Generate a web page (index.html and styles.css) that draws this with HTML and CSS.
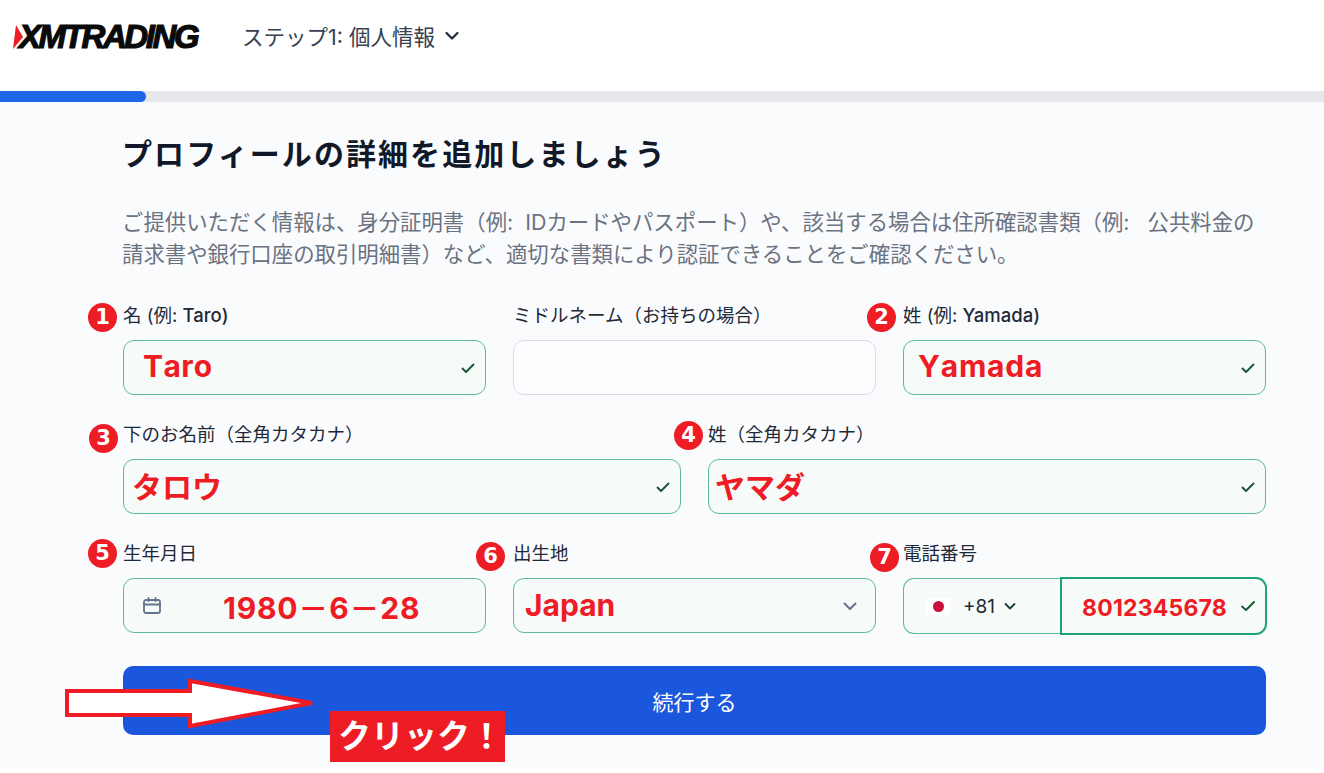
FILE: index.html
```html
<!DOCTYPE html>
<html lang="ja">
<head>
<meta charset="utf-8">
<title>XMTrading</title>
<link rel="stylesheet" href="styles.css">
</head>
<body>
<div class="page">
  <header class="header">
    <div class="logo">
      <svg class="logo-mark" width="10" height="24" viewBox="0 0 10 24"><path d="M3 0 L10 12 L0 24 Z" fill="#ee1c25"/></svg>
      <span class="logo-text">XMTRADING</span>
    </div>
    <div class="step">
      <span>ステップ1: 個人情報</span>
      <svg width="16" height="16" viewBox="0 0 16 16" fill="none" stroke="#1f2937" stroke-width="2.2" stroke-linecap="round" stroke-linejoin="round"><path d="M2.5 5 L8 10.5 L13.5 5"/></svg>
    </div>
  </header>
  <div class="progress"><div class="progress-fill"></div></div>
  <main class="main">
    <h1 class="title">プロフィールの詳細を追加しましょう</h1>
    <p class="lead">ご提供いただく情報は、身分証明書（例:&nbsp; IDカードやパスポート）や、該当する場合は住所確認書類（例:&nbsp;&nbsp; 公共料金の<br>請求書や銀行口座の取引明細書）など、適切な書類により認証できることをご確認ください。</p>

    <div class="row row-3">
      <div class="field">
        <span class="badge badge-1">1</span>
        <label class="label">名 (例: <span class="latin">Taro)</span></label>
        <div class="input valid"><span class="value value-taro">Taro</span>
          <svg class="check" width="16" height="16" viewBox="0 0 16 16" fill="none" stroke="#14532d" stroke-width="1.8" stroke-linecap="round" stroke-linejoin="round"><path d="M2.5 8.5 L6 12 L13.5 4.5"/></svg>
        </div>
      </div>
      <div class="field">
        <label class="label">ミドルネーム（お持ちの場合）</label>
        <div class="input empty"></div>
      </div>
      <div class="field">
        <span class="badge badge-2">2</span>
        <label class="label">姓 (例: <span class="latin">Yamada)</span></label>
        <div class="input valid"><span class="value value-yamada">Yamada</span>
          <svg class="check" width="16" height="16" viewBox="0 0 16 16" fill="none" stroke="#14532d" stroke-width="1.8" stroke-linecap="round" stroke-linejoin="round"><path d="M2.5 8.5 L6 12 L13.5 4.5"/></svg>
        </div>
      </div>
    </div>

    <div class="row row-2">
      <div class="field">
        <span class="badge badge-3">3</span>
        <label class="label">下のお名前（全角カタカナ）</label>
        <div class="input valid"><span class="value value-kana">タロウ</span>
          <svg class="check" width="16" height="16" viewBox="0 0 16 16" fill="none" stroke="#14532d" stroke-width="1.8" stroke-linecap="round" stroke-linejoin="round"><path d="M2.5 8.5 L6 12 L13.5 4.5"/></svg>
        </div>
      </div>
      <div class="field">
        <span class="badge badge-4">4</span>
        <label class="label">姓（全角カタカナ）</label>
        <div class="input valid"><span class="value value-kana value-kana-last">ヤマダ</span>
          <svg class="check" width="16" height="16" viewBox="0 0 16 16" fill="none" stroke="#14532d" stroke-width="1.8" stroke-linecap="round" stroke-linejoin="round"><path d="M2.5 8.5 L6 12 L13.5 4.5"/></svg>
        </div>
      </div>
    </div>

    <div class="row row-3 row-last">
      <div class="field">
        <span class="badge badge-5">5</span>
        <label class="label">生年月日</label>
        <div class="input valid date">
          <svg width="20" height="20" viewBox="0 0 20 20" fill="none" stroke="#64748b" stroke-width="1.8" stroke-linecap="round" stroke-linejoin="round"><rect x="2" y="4" width="16" height="13" rx="2"/><path d="M2 8.5 H18 M6.5 2 V5 M13.5 2 V5"/></svg>
          <span class="value value-date">1980－6－28</span>
        </div>
      </div>
      <div class="field">
        <span class="badge badge-6">6</span>
        <label class="label">出生地</label>
        <div class="input valid country"><span class="value value-country">Japan</span>
          <svg class="check" width="18" height="18" viewBox="0 0 18 18" fill="none" stroke="#64748b" stroke-width="2" stroke-linecap="round" stroke-linejoin="round"><path d="M3.5 6.5 L9 12 L14.5 6.5"/></svg>
        </div>
      </div>
      <div class="field">
        <span class="badge badge-7">7</span>
        <label class="label">電話番号</label>
        <div class="phone">
          <div class="phone-code">
            <span class="flag"><span class="flag-dot"></span></span>
            <span class="code">+81</span>
            <svg width="14" height="14" viewBox="0 0 14 14" fill="none" stroke="#14432d" stroke-width="1.8" stroke-linecap="round" stroke-linejoin="round"><path d="M2.5 5 L7 9.5 L11.5 5"/></svg>
          </div>
          <div class="phone-number"><span class="value value-phone">8012345678</span>
            <svg class="check" width="16" height="16" viewBox="0 0 16 16" fill="none" stroke="#14532d" stroke-width="1.8" stroke-linecap="round" stroke-linejoin="round"><path d="M2 8.5 L6 12 L14 4"/></svg>
          </div>
        </div>
      </div>
    </div>

    <button class="submit" type="button">続行する</button>
  </main>
  <svg class="arrow" width="254" height="54" viewBox="0 0 254 54"><path d="M2 13 H125 V3 L247 25 L125 48 V37 H2 Z" fill="#fff" stroke="#ee1c25" stroke-width="4"/></svg>
  <div class="click">クリック！</div>
</div>
</body>
</html>
```
FILE: styles.css
```css
* { box-sizing: border-box; }
html, body { margin: 0; padding: 0; background: #fff; }
body { font-family: Inter, "Noto Sans CJK JP", sans-serif; color: #1f2937; }
.page { position: relative; width: 1324px; height: 773px; overflow: hidden; }

.header { height: 91px; display: flex; align-items: center; padding: 0 0 18px 13px; background: #fff; }
.logo { display: flex; align-items: center; width: 229px; }
.logo-mark { flex: none; }
.logo-text { font: italic 700 33px "Liberation Sans", sans-serif; letter-spacing: -2.4px; color: #0a0a0a; -webkit-text-stroke: 1.2px #0a0a0a; margin-left: -4px; }
.step { display: flex; align-items: center; gap: 9px; font-size: 21.5px; color: #374151; margin-top: -2px; }

.progress { height: 11px; background: #e5e7eb; }
.progress-fill { width: 146px; height: 100%; background: #1d66e8; border-radius: 0 6px 6px 0; }

.main { height: 665px; background: #fafbfd; padding: 31px 58px 0 123px; }
.title { margin: 0 0 0 -1px; font-size: 30px; line-height: 42px; font-weight: 700; color: #111827; letter-spacing: 2.08px; }
.lead { margin: 31px 0 0 -1px; font-size: 21.4px; line-height: 32px; color: #6b7280; white-space: nowrap; }

.row { display: grid; gap: 27px; }
.row + .row { margin-top: 28px; }
.row-3 { grid-template-columns: repeat(3, 1fr); margin-top: 34px; }
.row-2 { grid-template-columns: repeat(2, 1fr); }

.field { position: relative; }
.label { display: block; font-size: 18.5px; line-height: 24px; margin: -1px 0 13px; font-weight: 400; color: #1f2937; white-space: nowrap; }
.latin { font-weight: 500; }

.badge { position: absolute; width: 29px; height: 29px; border-radius: 50%; background: #ee1c25; color: #fff; font: 700 21px/29px "DejaVu Sans", sans-serif; text-align: center; }
.badge-1 { left: -35px; top: -1px; }
.badge-2 { left: -36px; top: -1px; }
.badge-3 { left: -34px; top: 1px; }
.badge-4 { left: -34px; top: -2px; }
.badge-5 { left: -35px; top: -3px; }
.badge-6 { left: -37px; top: 0; }
.badge-7 { left: -33px; top: 1px; }

.input { height: 55px; border: 1px solid #cbd5e1; border-radius: 11px; display: flex; align-items: center; justify-content: space-between; padding: 0 9px 0 10px; background: #fff; }
.input.empty { background: #fdfdff; border-color: #d8dce4; }
.input.valid { background: #f6fbf9; border-color: #5dbb96; }
.input.date { justify-content: flex-start; padding-left: 18px; }
.input.country { padding-right: 16px; }

.value { color: #ee1c25; font-family: Inter, "Noto Sans CJK JP", sans-serif; font-weight: 700; }
.value-taro { font-size: 30px; margin-left: 9px; margin-top: -3px; font-kerning: none; letter-spacing: 0.4px; }
.value-yamada { font-size: 30px; margin-left: 4px; margin-top: -3px; font-kerning: none; letter-spacing: 0.8px; }
.value-kana { font-size: 30px; margin-left: -2px; margin-top: -3px; }
.value-kana-last { margin-left: -4px; }
.value-date { font-size: 30px; margin-left: 61px; letter-spacing: 0.8px; }
.value-country { font-size: 30px; margin-left: 1px; margin-top: -2px; }
.value-phone { font-size: 23px; margin-top: 4px; letter-spacing: 0.2px; }

.phone { display: flex; height: 56px; }
.phone-code { width: 157px; border: 1px solid #5dbb96; border-right: 0; border-radius: 11px 0 0 11px; background: #f6fbf9; display: flex; align-items: center; padding-left: 22px; }
.flag { width: 25px; height: 17px; background: #fff; display: flex; align-items: center; justify-content: center; }
.flag-dot { width: 11px; height: 11px; border-radius: 50%; background: #c8103e; }
.code { margin-left: 12px; font-size: 19px; color: #1f2937; }
.phone-code svg { margin-left: 8px; }
.phone-number { flex: 1; border: 2px solid #1fa477; border-radius: 0 11px 11px 0; background: #f6fbf9; display: flex; align-items: center; justify-content: space-between; padding: 0 9px 0 20px; margin-right: -1px; margin-top: -1px; height: 58px; }

.submit { display: block; width: 100%; height: 69px; margin-top: 32px; border: 0; border-radius: 10px; background: #1b57dc; color: #fff; font: 400 21px Inter, "Noto Sans CJK JP", sans-serif; }

.arrow { position: absolute; left: 65px; top: 678px; }
.click { position: absolute; left: 330px; top: 711px; width: 175px; height: 51px; background: #ee1c25; color: #fff; font: 700 33px/46px "Noto Sans CJK JP", sans-serif; padding-left: 8px; white-space: nowrap; }
```
